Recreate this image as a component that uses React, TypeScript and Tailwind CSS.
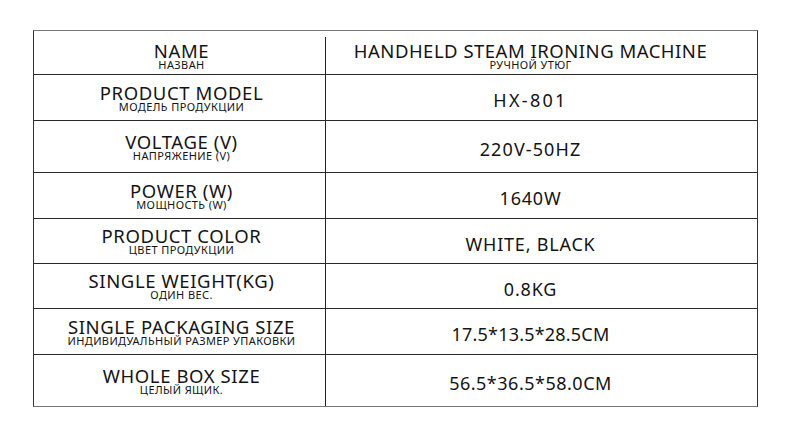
const ROWS = [
  { en: "NAME", ru: "НАЗВАН", value: "HANDHELD STEAM IRONING MACHINE", valueRu: "РУЧНОЙ УТЮГ", h: "h-[44px] pt-[6px]", track: "tracking-[0.5px]" },
  { en: "PRODUCT MODEL", ru: "МОДЕЛЬ ПРОДУКЦИИ", value: "HX-801", h: "h-[46px]", track: "tracking-[2.3px]" },
  { en: "VOLTAGE (V)", ru: "НАПРЯЖЕНИЕ (V)", value: "220V-50HZ", h: "h-[52px]", track: "tracking-[1.1px]" },
  { en: "POWER (W)", ru: "МОЩНОСТЬ (W)", value: "1640W", h: "h-[46px]", track: "tracking-[0.8px]" },
  { en: "PRODUCT COLOR", ru: "ЦВЕТ ПРОДУКЦИИ", value: "WHITE, BLACK", h: "h-[45px]", track: "tracking-[0.8px]" },
  { en: "SINGLE WEIGHT(KG)", ru: "ОДИН ВЕС.", value: "0.8KG", h: "h-[45px]", track: "tracking-[0.8px]" },
  { en: "SINGLE PACKAGING SIZE", ru: "ИНДИВИДУАЛЬНЫЙ РАЗМЕР УПАКОВКИ", value: "17.5*13.5*28.5CM", h: "h-[46px]", track: "tracking-[0.2px]" },
  { en: "WHOLE BOX SIZE", ru: "ЦЕЛЫЙ ЯЩИК.", value: "56.5*36.5*58.0CM", h: "h-[51px]", track: "tracking-[0.5px]" },
];

export default function App() {
  return (
    <div
      className="h-[425px] w-[790px] bg-white pt-[30px] pl-[33px] text-[#141414]"
      style={{ fontFamily: '"Noto Sans", "Open Sans", sans-serif' }}
    >
      <div className="w-[725px] border border-[#333] border-t-[#777] border-b-[#777]">
        {ROWS.map((r, i) => (
          <div
            key={r.en}
            className={`flex ${r.h} ${i < ROWS.length - 1 ? "border-b border-[#2a2a2a]" : ""}`}
          >
            <div className="flex w-[292px] shrink-0 flex-col items-center justify-center border-r border-[#222] pl-[4px]">
              <span className="whitespace-nowrap text-[18.5px] leading-[18px] tracking-[0.6px]">{r.en}</span>
              <span className="-mt-px whitespace-nowrap text-[11px] leading-[11px] tracking-[0.4px]">{r.ru}</span>
            </div>
            <div className="flex flex-1 flex-col items-center justify-center pr-[22px]">
              {r.valueRu ? (
                <>
                  <span className={`whitespace-nowrap text-[18.5px] leading-[18px] ${r.track}`}>{r.value}</span>
                  <span className="-mt-px whitespace-nowrap text-[11px] leading-[11px] tracking-[0.4px]">{r.valueRu}</span>
                </>
              ) : (
                <span className={`whitespace-nowrap pt-[5px] text-[18px] leading-[18px] ${r.track}`}>{r.value}</span>
              )}
            </div>
          </div>
        ))}
      </div>
    </div>
  );
}
